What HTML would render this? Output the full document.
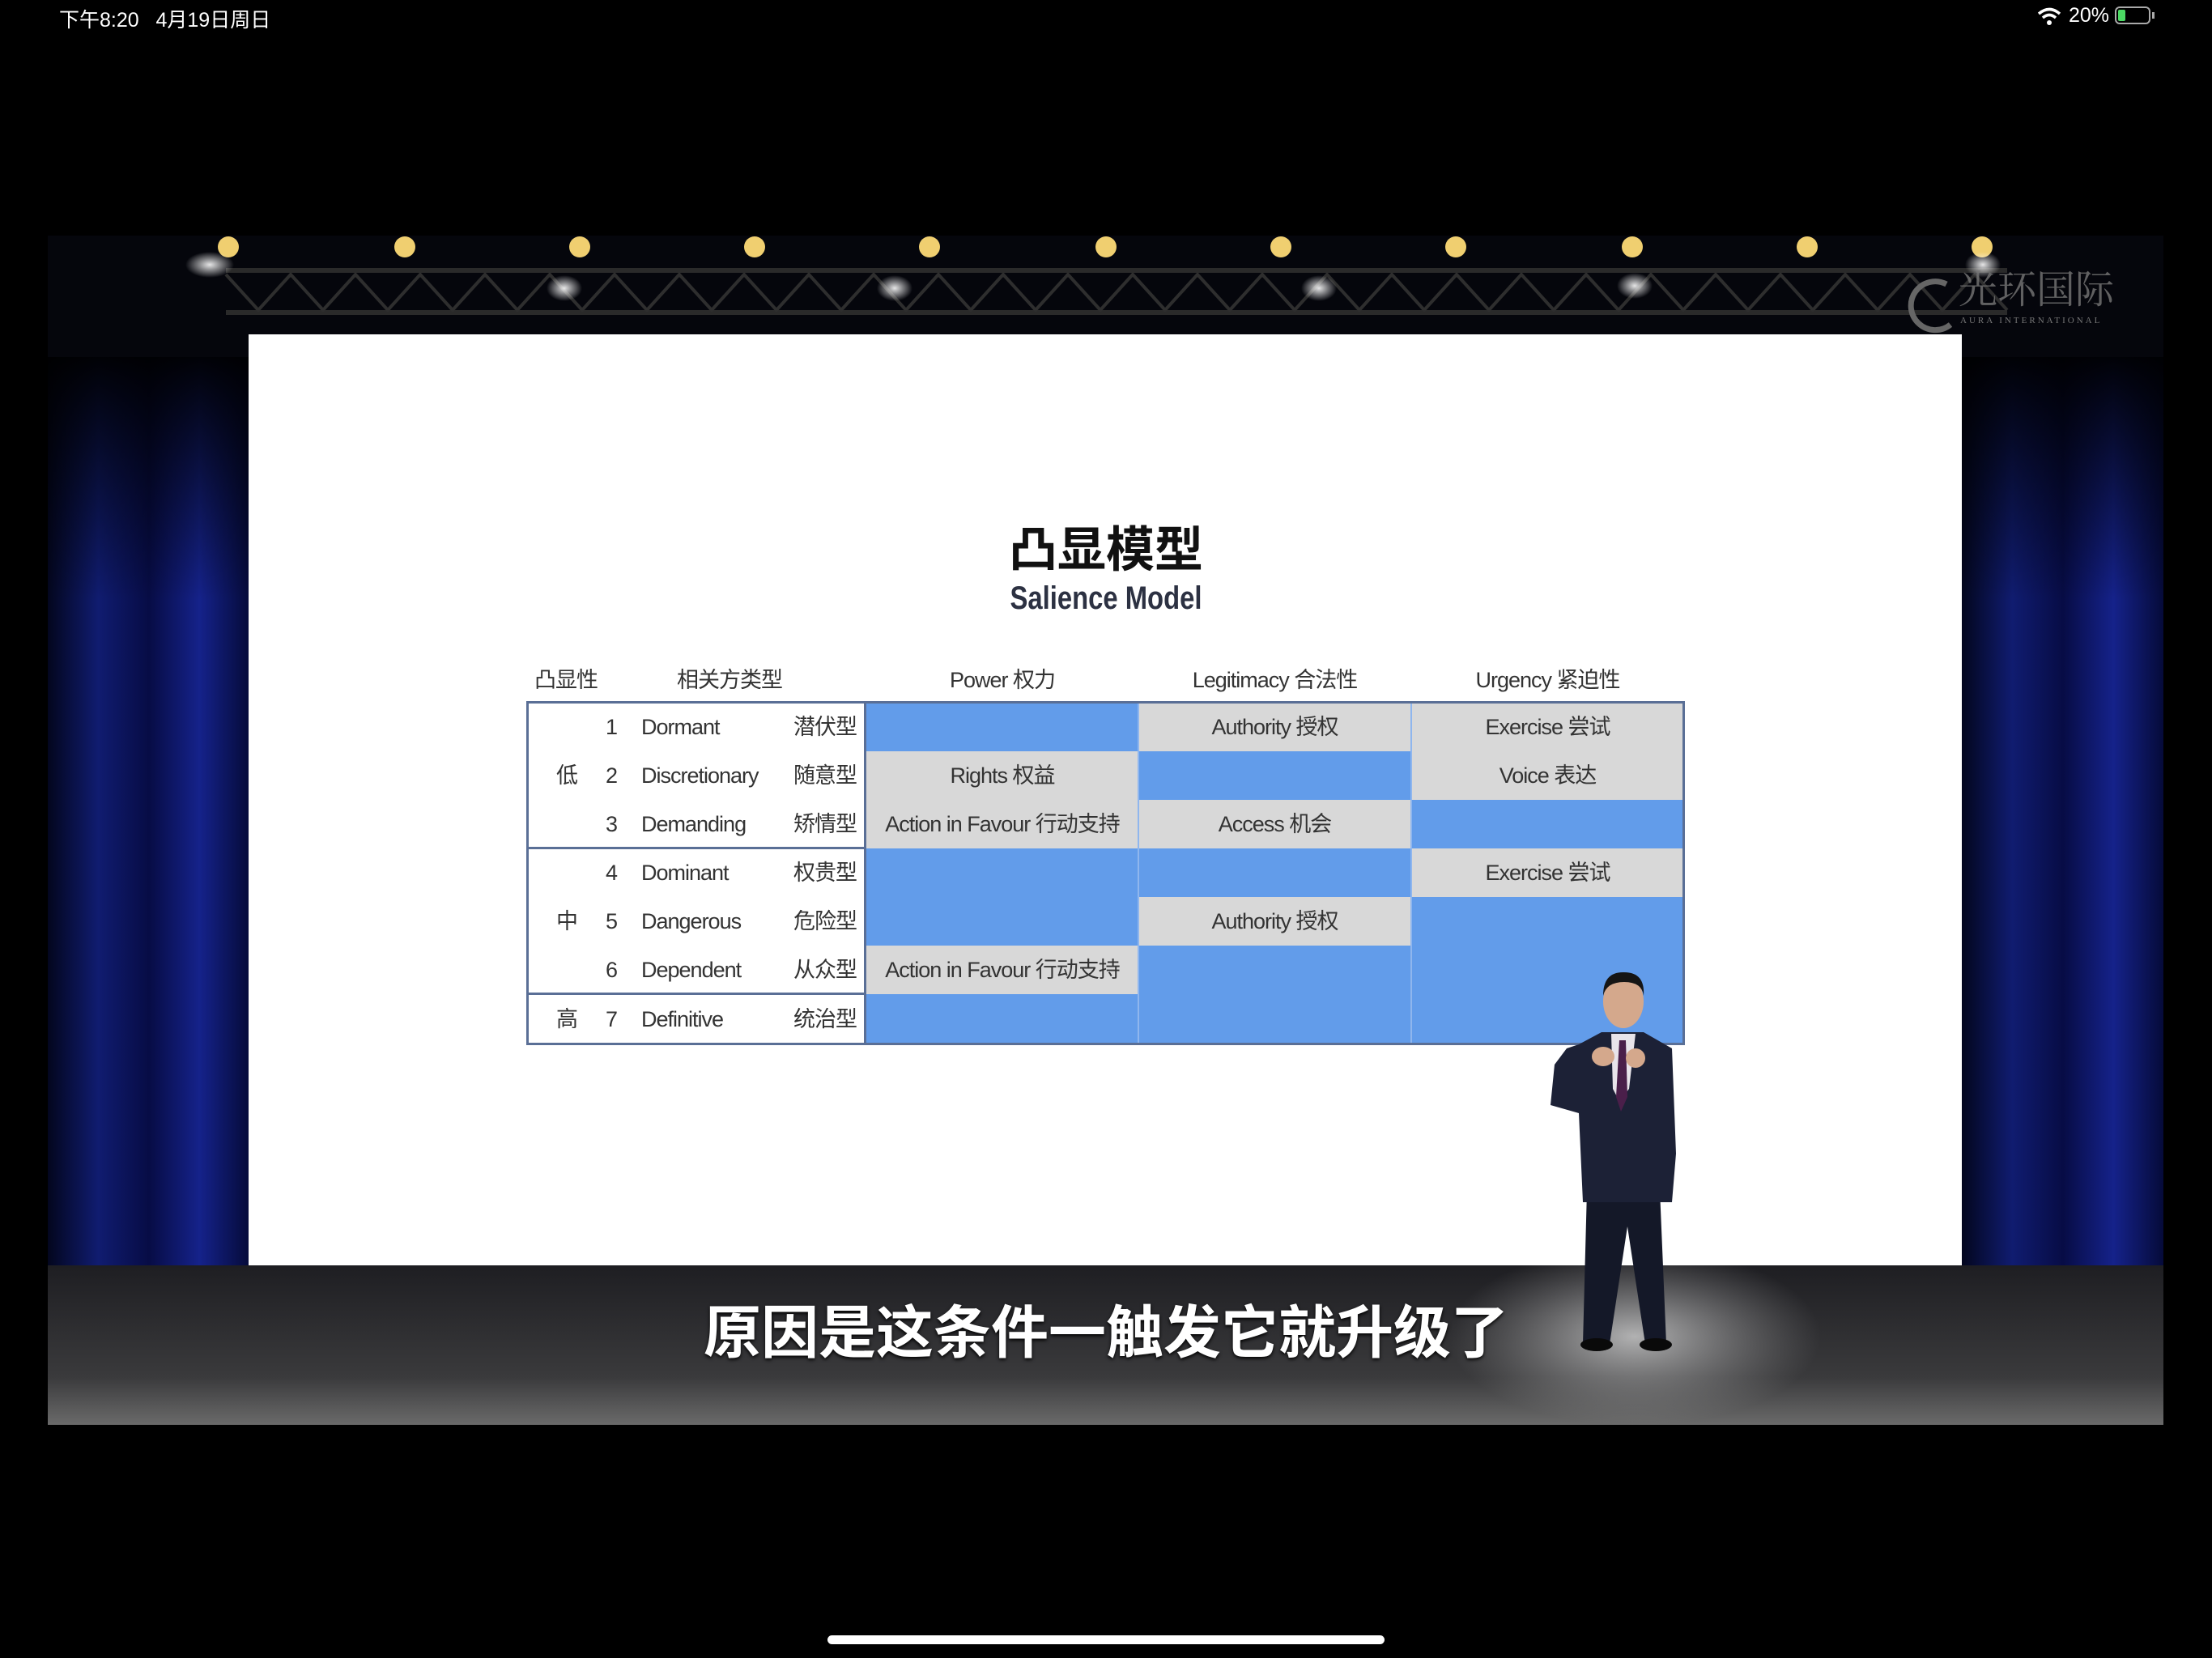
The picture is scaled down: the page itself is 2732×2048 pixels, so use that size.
<!DOCTYPE html>
<html><head><meta charset="utf-8"><style>
*{margin:0;padding:0;box-sizing:border-box}
body{width:2732px;height:2048px;background:#000;position:relative;overflow:hidden;font-family:"Liberation Sans","Noto Sans CJK SC",sans-serif}
.abs{position:absolute}
.sb{color:#fff;font-size:25px;top:5px}
#video{left:59px;top:291px;width:2613px;height:1469px;background:#05060c;overflow:hidden}
#slide{left:307px;top:413px;width:2116px;height:1150px;background:#fff}
.t{position:absolute;font-family:"Liberation Sans","Noto Sans CJK SC",sans-serif;font-size:27px;color:#333;line-height:60px;white-space:nowrap;letter-spacing:-1px}
.cell{position:absolute;height:60px;line-height:60px;text-align:center;font-size:27px;color:#333;letter-spacing:-1px;white-space:nowrap}
.b{background:#629cea}.g{background:#d8d8d8}
</style></head><body>
<div class="abs sb" style="left:73px">下午8:20&nbsp;&nbsp;&nbsp;4月19日周日</div>
<div class="abs sb" style="left:2555px">20%</div>
<svg class="abs" style="left:2516px;top:8px" width="30" height="24" viewBox="0 0 30 24"><path d="M2 9 Q15 -2 28 9" stroke="#fff" stroke-width="3.5" fill="none"/><path d="M7 14 Q15 7 23 14" stroke="#fff" stroke-width="3.5" fill="none"/><circle cx="15" cy="20" r="3" fill="#fff"/></svg>
<div class="abs" style="left:2612px;top:8px;width:44px;height:22px;border:2px solid #aaa;border-radius:6px"><div style="margin:2px;width:9px;height:14px;background:#4cd964;border-radius:2px"></div></div>
<div class="abs" style="left:2658px;top:15px;width:3px;height:8px;background:#aaa"></div>

<div id="video" class="abs">
<svg class="abs" style="left:0;top:0" width="2613" height="1469">
<defs>
<linearGradient id="cur" x1="0" x2="1"><stop offset="0" stop-color="#03061e"/><stop offset="0.25" stop-color="#101c70"/><stop offset="0.5" stop-color="#070c45"/><stop offset="0.75" stop-color="#15228a"/><stop offset="1" stop-color="#050a38"/></linearGradient>
<linearGradient id="fl" x1="0" y1="0" x2="0" y2="1"><stop offset="0" stop-color="#1e1e22"/><stop offset="0.7" stop-color="#3a3a3c"/><stop offset="1" stop-color="#6a6a6a"/></linearGradient>
<radialGradient id="glow" cx="0.5" cy="0.5" r="0.5"><stop offset="0" stop-color="#ddd" stop-opacity=".75"/><stop offset="1" stop-color="#aaa" stop-opacity="0"/></radialGradient>
<radialGradient id="sp" cx="0.5" cy="0.5" r="0.5"><stop offset="0" stop-color="#fff" stop-opacity=".9"/><stop offset="1" stop-color="#fff" stop-opacity="0"/></radialGradient>
<linearGradient id="vt" x1="0" y1="0" x2="0" y2="1"><stop offset="0" stop-color="#000" stop-opacity=".95"/><stop offset="0.5" stop-color="#000" stop-opacity="0"/></linearGradient>
</defs>
<rect x="0" y="150" width="250" height="1130" fill="url(#cur)"/>
<rect x="2364" y="150" width="250" height="1130" fill="url(#cur)"/>
<rect x="0" y="150" width="2613" height="600" fill="url(#vt)"/>
<rect x="0" y="1272" width="2613" height="197" fill="url(#fl)"/>
<ellipse cx="1960" cy="1360" rx="230" ry="110" fill="url(#glow)"/>
<rect x="220" y="40" width="2200" height="6" fill="#2a2a2a"/>
<rect x="220" y="92" width="2200" height="6" fill="#2a2a2a"/>
<path d="M220 48 L260 92 L300 48 L340 92 L380 48 L420 92 L460 48 L500 92 L540 48 L580 92 L620 48 L660 92 L700 48 L740 92 L780 48 L820 92 L860 48 L900 92 L940 48 L980 92 L1020 48 L1060 92 L1100 48 L1140 92 L1180 48 L1220 92 L1260 48 L1300 92 L1340 48 L1380 92 L1420 48 L1460 92 L1500 48 L1540 92 L1580 48 L1620 92 L1660 48 L1700 92 L1740 48 L1780 92 L1820 48 L1860 92 L1900 48 L1940 92 L1980 48 L2020 92 L2060 48 L2100 92 L2140 48 L2180 92 L2220 48 L2260 92 L2300 48 L2340 92 L2380 48 L2420 92" stroke="#2e2e2e" stroke-width="4" fill="none"/>
<g fill="#f0cf70">
<circle cx="223" cy="14" r="13"/><circle cx="441" cy="14" r="13"/><circle cx="657" cy="14" r="13"/><circle cx="873" cy="14" r="13"/><circle cx="1089" cy="14" r="13"/><circle cx="1307" cy="14" r="13"/><circle cx="1523" cy="14" r="13"/><circle cx="1739" cy="14" r="13"/><circle cx="1957" cy="14" r="13"/><circle cx="2173" cy="14" r="13"/><circle cx="2389" cy="14" r="13"/>
</g>
<g fill="url(#sp)"><ellipse cx="200" cy="36" rx="30" ry="16"/><ellipse cx="638" cy="65" rx="22" ry="16"/><ellipse cx="1046" cy="65" rx="22" ry="16"/><ellipse cx="1570" cy="65" rx="22" ry="16"/><ellipse cx="1960" cy="62" rx="22" ry="16"/><ellipse cx="2390" cy="36" rx="22" ry="16"/></g>
<text x="2360" y="83" font-family="Noto Serif CJK SC,serif" font-size="48" fill="#777" opacity=".8">光环国际</text>
<text x="2362" y="108" font-family="Liberation Serif,serif" font-size="11" fill="#777" letter-spacing="3">AURA INTERNATIONAL</text>
<path d="M2345 60 A30 30 0 1 0 2350 110" stroke="#666" stroke-width="7" fill="none"/>
</svg>
</div>

<div id="slide" class="abs"></div>
<div class="abs" style="left:1066px;top:645px;width:600px;text-align:center;font-size:60px;font-weight:bold;color:#111;line-height:70px;font-family:'Liberation Sans','Noto Sans CJK SC',sans-serif">凸显模型</div>
<div class="abs" style="left:1066px;top:716px;width:600px;text-align:center;font-size:40px;font-weight:bold;color:#2c3142;line-height:46px;transform:scaleX(.82)">Salience Model</div>

<div class="t" style="left:660px;top:810px">凸显性</div>
<div class="t" style="left:836px;top:810px">相关方类型</div>
<div class="cell" style="left:1070px;top:810px;width:336px">Power 权力</div>
<div class="cell" style="left:1406px;top:810px;width:337px">Legitimacy 合法性</div>
<div class="cell" style="left:1743px;top:810px;width:337px">Urgency 紧迫性</div>

<div class="cell b" style="left:1070px;top:868px;width:336px"></div>
<div class="cell g" style="left:1406px;top:868px;width:337px">Authority 授权</div>
<div class="cell g" style="left:1743px;top:868px;width:337px">Exercise 尝试</div>
<div class="cell g" style="left:1070px;top:928px;width:336px">Rights 权益</div>
<div class="cell b" style="left:1406px;top:928px;width:337px"></div>
<div class="cell g" style="left:1743px;top:928px;width:337px">Voice 表达</div>
<div class="cell g" style="left:1070px;top:988px;width:336px">Action in Favour 行动支持</div>
<div class="cell g" style="left:1406px;top:988px;width:337px">Access 机会</div>
<div class="cell b" style="left:1743px;top:988px;width:337px"></div>
<div class="cell b" style="left:1070px;top:1048px;width:336px"></div>
<div class="cell b" style="left:1406px;top:1048px;width:337px"></div>
<div class="cell g" style="left:1743px;top:1048px;width:337px">Exercise 尝试</div>
<div class="cell b" style="left:1070px;top:1108px;width:336px"></div>
<div class="cell g" style="left:1406px;top:1108px;width:337px">Authority 授权</div>
<div class="cell b" style="left:1743px;top:1108px;width:337px"></div>
<div class="cell g" style="left:1070px;top:1168px;width:336px">Action in Favour 行动支持</div>
<div class="cell b" style="left:1406px;top:1168px;width:337px"></div>
<div class="cell b" style="left:1743px;top:1168px;width:337px"></div>
<div class="cell b" style="left:1070px;top:1228px;width:336px;height:62px"></div>
<div class="cell b" style="left:1406px;top:1228px;width:337px;height:62px"></div>
<div class="cell b" style="left:1743px;top:1228px;width:337px;height:62px"></div>
<div class="abs" style="left:1405px;top:868px;width:2px;height:422px;background:#8fb6ee"></div>
<div class="abs" style="left:1742px;top:868px;width:2px;height:422px;background:#8fb6ee"></div>
<div class="abs" style="left:650px;top:866px;width:1431px;height:425px;border:3px solid #5a6f96"></div>
<div class="abs" style="left:1067px;top:866px;width:3px;height:425px;background:#5a6f96"></div>
<div class="abs" style="left:650px;top:1046px;width:420px;height:3px;background:#5a6f96"></div>
<div class="abs" style="left:650px;top:1226px;width:420px;height:3px;background:#5a6f96"></div>

<div class="t" style="left:687px;top:928px">低</div>
<div class="t" style="left:687px;top:1108px">中</div>
<div class="t" style="left:687px;top:1229px">高</div>
<div class="t" style="left:748px;top:868px">1</div><div class="t" style="left:792px;top:868px">Dormant</div><div class="t" style="left:980px;top:868px">潜伏型</div>
<div class="t" style="left:748px;top:928px">2</div><div class="t" style="left:792px;top:928px">Discretionary</div><div class="t" style="left:980px;top:928px">随意型</div>
<div class="t" style="left:748px;top:988px">3</div><div class="t" style="left:792px;top:988px">Demanding</div><div class="t" style="left:980px;top:988px">矫情型</div>
<div class="t" style="left:748px;top:1048px">4</div><div class="t" style="left:792px;top:1048px">Dominant</div><div class="t" style="left:980px;top:1048px">权贵型</div>
<div class="t" style="left:748px;top:1108px">5</div><div class="t" style="left:792px;top:1108px">Dangerous</div><div class="t" style="left:980px;top:1108px">危险型</div>
<div class="t" style="left:748px;top:1168px">6</div><div class="t" style="left:792px;top:1168px">Dependent</div><div class="t" style="left:980px;top:1168px">从众型</div>
<div class="t" style="left:748px;top:1229px">7</div><div class="t" style="left:792px;top:1229px">Definitive</div><div class="t" style="left:980px;top:1229px">统治型</div>

<svg class="abs" style="left:1900px;top:1195px" width="190" height="480" viewBox="0 0 190 480">
<path d="M55 465 L60 275 L150 275 L158 465 L132 465 L110 320 L88 465 Z" fill="#141828"/>
<ellipse cx="72" cy="466" rx="20" ry="8" fill="#0a0a0a"/><ellipse cx="145" cy="466" rx="20" ry="8" fill="#0a0a0a"/>
<path d="M50 95 L78 80 L130 80 L165 100 L170 230 L165 290 L55 290 L50 180 L15 170 L20 120 L35 100 Z" fill="#1c2136"/>
<path d="M90 82 L120 82 L112 150 L100 165 L92 150 Z" fill="#e8e4ea"/>
<path d="M100 90 L108 90 L110 160 L102 178 L96 160 Z" fill="#4a1f4a"/>
<ellipse cx="105" cy="42" rx="25" ry="33" fill="#d4a88c"/>
<path d="M80 35 Q80 5 106 6 Q132 6 130 35 Q128 18 106 18 Q84 18 80 35 Z" fill="#151515"/>
<ellipse cx="80" cy="110" rx="14" ry="12" fill="#d4a88c"/><ellipse cx="120" cy="112" rx="12" ry="12" fill="#d4a88c"/>
</svg>

<div class="abs" style="left:846px;top:1608px;width:1040px;text-align:center;color:#fff;font-size:71px;font-weight:bold;line-height:80px;font-family:'Liberation Sans','Noto Sans CJK SC',sans-serif;text-shadow:0 2px 4px #000">原因是这条件一触发它就升级了</div>

<div class="abs" style="left:1022px;top:2020px;width:688px;height:11px;border-radius:6px;background:#fff"></div>
</body></html>
